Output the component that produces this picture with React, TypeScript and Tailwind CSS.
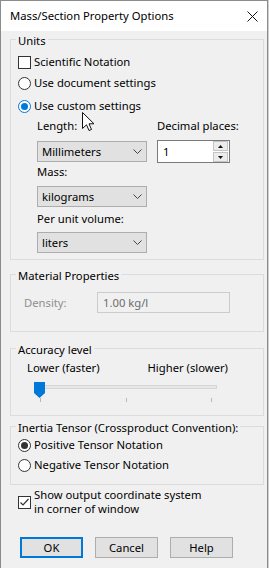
import React from 'react';

function Chevron() {
  return (
    <svg width="9" height="5" viewBox="0 0 9 5" className="shrink-0">
      <polyline points="0.5,0.5 4.5,4.5 8.5,0.5" fill="none" stroke="#444" strokeWidth="1" />
    </svg>
  );
}

function Select({ value }: { value: string }) {
  return (
    <div className="flex h-[21px] w-[110px] items-center justify-between border border-[#adadad] bg-[#e1e1e1] pl-[4px] pr-[4px]">
      <span>{value}</span>
      <Chevron />
    </div>
  );
}

function CheckBox({ checked = false }: { checked?: boolean }) {
  return (
    <span className="flex h-[13px] w-[13px] shrink-0 items-center justify-center border border-[#333] bg-white">
      {checked && (
        <svg width="11" height="11" viewBox="0 0 11 11">
          <polyline points="1.5,5.5 4,8 9.5,2" fill="none" stroke="#333" strokeWidth="1.2" />
        </svg>
      )}
    </span>
  );
}

function Radio({ checked = false, hot = false }: { checked?: boolean; hot?: boolean }) {
  return (
    <span
      className={`flex h-[13px] w-[13px] shrink-0 items-center justify-center rounded-full border bg-white ${
        hot ? 'border-[#0078d7]' : 'border-[#333]'
      }`}
    >
      {checked && (
        <span className={`h-[7px] w-[7px] rounded-full ${hot ? 'bg-[#0078d7]' : 'bg-[#333]'}`} />
      )}
    </span>
  );
}

function Legend({ children }: { children: React.ReactNode }) {
  return <legend className="ml-[5px] px-[2px] pt-[3px] leading-[16px]">{children}</legend>;
}

function Button({ label, primary = false }: { label: string; primary?: boolean }) {
  return (
    <div
      className={`flex h-[21px] w-[63px] items-center justify-center bg-[#e1e1e1] ${
        primary ? 'border-2 border-[#0078d7]' : 'border border-[#adadad]'
      }`}
    >
      {label}
    </div>
  );
}

export default function App() {
  return (
    <div className="flex h-[568px] w-[269px] bg-[#cfcfcf] font-['Noto_Sans',sans-serif] text-[11.25px] leading-[16px] text-black">
      <div className="relative flex h-[568px] w-[268px] flex-col border-x border-t border-[#8c8c8c] bg-[#f0f0f0]">
        {/* title bar */}
        <div className="flex h-[30px] items-center justify-between bg-white pl-[9px] pr-[9px]">
          <span>Mass/Section Property Options</span>
          <svg width="11" height="11" viewBox="0 0 11 11">
            <path d="M0.5 0.5 L10.5 10.5 M10.5 0.5 L0.5 10.5" stroke="#111" strokeWidth="1" />
          </svg>
        </div>

        <div className="flex flex-col pl-[9px]">
          {/* Units */}
          <fieldset className="-mt-px w-[254px] border border-[#dcdcdc] pb-[6px]">
            <Legend>Units</Legend>
            <div className="mt-[5px] flex flex-col pl-[7px]">
              <label className="flex h-[16px] items-center gap-[3px]">
                <CheckBox />
                <span>Scientific Notation</span>
              </label>
              <label className="mt-[5px] flex h-[16px] items-center gap-[3px]">
                <Radio />
                <span>Use document settings</span>
              </label>
              <label className="mt-[7px] flex h-[16px] items-center gap-[3px]">
                <Radio checked hot />
                <span>Use custom settings</span>
              </label>
            </div>
            <div className="mt-[4px] flex pl-[26px]">
              <div className="flex w-[110px] flex-col">
                <span>Length:</span>
                <div className="mt-[7px]">
                  <Select value="Millimeters" />
                </div>
                <span className="mt-[2px]">Mass:</span>
                <div className="mt-[6px]">
                  <Select value="kilograms" />
                </div>
                <span className="mt-[4px]">Per unit volume:</span>
                <div className="mt-[5px]">
                  <Select value="liters" />
                </div>
              </div>
              <div className="ml-[10px] flex flex-col">
                <span>Decimal places:</span>
                <div className="mt-[6px] flex h-[23px] w-[73px] border border-[#7a7a7a] bg-white">
                  <span className="flex-1 pl-[5px] leading-[21px]">1</span>
                  <div className="flex w-[16px] flex-col justify-center gap-px pr-px">
                    <div className="flex h-[10px] items-center justify-center border border-[#c4c4c4] bg-[#ececec]">
                      <svg width="5" height="3" viewBox="0 0 5 3">
                        <path d="M2.5 0 L5 3 L0 3 Z" fill="#111" />
                      </svg>
                    </div>
                    <div className="flex h-[10px] items-center justify-center border border-[#c4c4c4] bg-[#ececec]">
                      <svg width="5" height="3" viewBox="0 0 5 3">
                        <path d="M0 0 L5 0 L2.5 3 Z" fill="#111" />
                      </svg>
                    </div>
                  </div>
                </div>
              </div>
            </div>
          </fieldset>

          {/* Material Properties */}
          <fieldset className="mt-[5px] w-[254px] border border-[#dcdcdc] pb-[18px]">
            <Legend>Material Properties</Legend>
            <div className="mt-[8px] flex items-center pl-[13px]">
              <span className="w-[73px] text-[#8f8f8f]">Density:</span>
              <div className="flex h-[21px] w-[133px] items-center border border-[#cccccc] bg-[#f0f0f0] pl-[5px] text-[#6d6d6d]">
                1.00 kg/l
              </div>
            </div>
          </fieldset>

          {/* Accuracy level */}
          <fieldset className="mt-[7px] w-[254px] border border-[#dcdcdc] pb-[11px]">
            <Legend>Accuracy level</Legend>
            <div className="mt-[2px] ml-[16px] flex w-[201px] justify-between">
              <span>Lower (faster)</span>
              <span>Higher (slower)</span>
            </div>
            <div className="relative mt-[6px] ml-[23px] h-[22px] w-[189px]">
              <div className="absolute top-[3px] right-[6px] left-[6px] h-[4px] border border-[#d6d6d6] bg-[#e7e7e7]" />
              <div className="absolute top-[16px] left-[6px] h-[4px] w-px bg-[#b8b8b8]" />
              <div className="absolute top-[16px] left-[92px] h-[4px] w-px bg-[#b8b8b8]" />
              <div className="absolute top-[16px] left-[177px] h-[4px] w-px bg-[#b8b8b8]" />
              <svg className="absolute top-0 left-0" width="11" height="16" viewBox="0 0 11 16">
                <path d="M0 0 H11 V11 L5.5 16 L0 11 Z" fill="#0078d7" />
              </svg>
            </div>
          </fieldset>

          {/* Inertia Tensor */}
          <fieldset className="mt-[1px] w-[254px] border border-[#dcdcdc] pb-[11px]">
            <Legend>Inertia Tensor (Crossproduct Convention):</Legend>
            <div className="mt-[1px] flex flex-col pl-[7px]">
              <label className="flex h-[16px] items-center gap-[3px]">
                <Radio checked />
                <span>Positive Tensor Notation</span>
              </label>
              <label className="mt-[4px] flex h-[16px] items-center gap-[3px]">
                <Radio />
                <span>Negative Tensor Notation</span>
              </label>
            </div>
          </fieldset>

          <label className="mt-[3px] ml-[8px] flex items-center gap-[3px]">
            <CheckBox checked />
            <span className="flex flex-col leading-[14px]">
              <span>Show output coordinate system</span>
              <span>in corner of window</span>
            </span>
          </label>

          <div className="mt-[21px] ml-[10px] flex gap-[12px]">
            <Button label="OK" primary />
            <Button label="Cancel" />
            <Button label="Help" />
          </div>
        </div>

        {/* mouse pointer */}
        <svg className="absolute top-[111px] left-[81px]" width="13" height="20" viewBox="0 0 13 20">
          <path
            d="M0.5 0.5 L0.5 16.5 L4.5 12.8 L7 18.5 L9.5 17.5 L7 11.8 L12 11.8 Z"
            fill="#fff"
            stroke="#111"
            strokeWidth="1"
            strokeLinejoin="round"
          />
        </svg>
      </div>
    </div>
  );
}
